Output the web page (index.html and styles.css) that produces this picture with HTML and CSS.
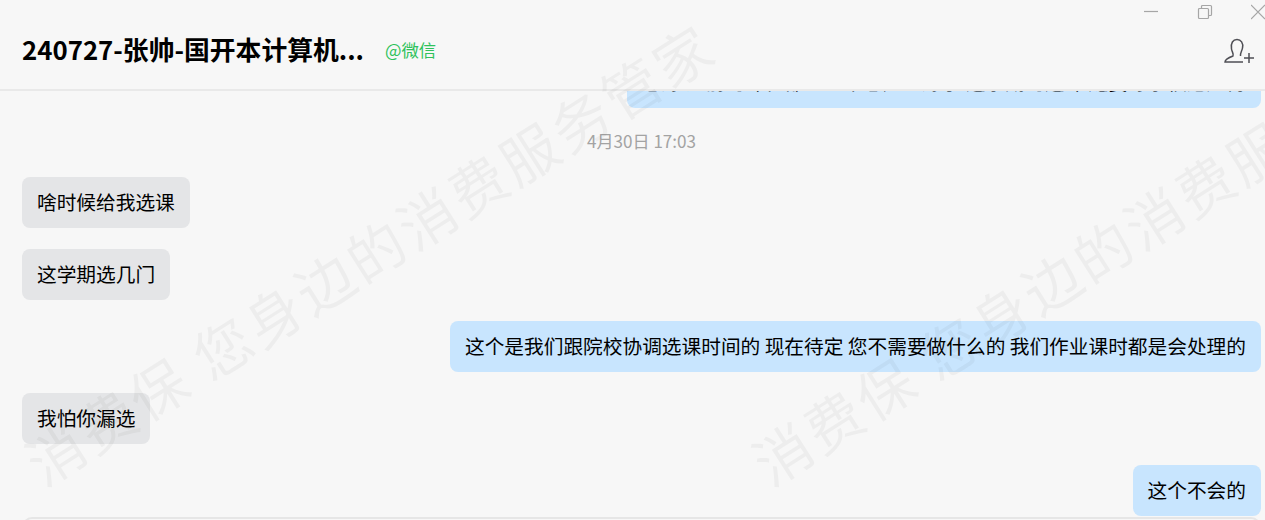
FILE: index.html
```html
<!DOCTYPE html>
<html lang="zh-CN">
<head>
    <meta charset="UTF-8">
    <meta name="viewport" content="width=device-width, initial-scale=1.0">
    <link rel="stylesheet" href="styles.css">
    <title>聊天窗口</title>
</head>
<body>
    <div class="app">
        <header class="header">
            <div class="win-controls">
                <svg class="win-btn" width="14" height="14" viewBox="0 0 14 14"><path d="M0 7.5H14"/></svg>
                <svg class="win-btn" width="16" height="16" viewBox="0 0 16 16"><path d="M1.5 5.5a1 1 0 0 1 1-1h8a1 1 0 0 1 1 1v8a1 1 0 0 1-1 1h-8a1 1 0 0 1-1-1zM4.5 4.5V2.5a1 1 0 0 1 1-1h8a1 1 0 0 1 1 1v8a1 1 0 0 1-1 1h-2"/></svg>
                <svg class="win-btn win-close" width="14" height="16" viewBox="0 0 14 16"><path d="M0 1L14 15M14 1L0 15"/></svg>
            </div>
            <div class="title-row">
                <h1 class="title">240727-张帅-国开本计算机...</h1>
                <span class="source">@微信</span>
                <svg class="add-member" width="32" height="28" viewBox="0 0 32 28"><path d="M20 24H2C2 21 6 19.5 10 18C11 16 9 14 8.5 11C7.5 5 10 1.5 14 1.5C18 1.5 20.5 5 19.5 10C19 13 17 15 17.5 18M21 20H31M26 15V25"/></svg>
            </div>
        </header>

        <main class="messages">
            <div class="bubble mine">您好 之前的课程都已经帮您处理好了 这学期的选课 还要等学校通知再</div>
            <div class="time">4月30日 17:03</div>
            <div class="bubble theirs">啥时候给我选课</div>
            <div class="bubble theirs">这学期选几门</div>
            <div class="bubble mine">这个是我们跟院校协调选课时间的 现在待定 您不需要做什么的 我们作业课时都是会处理的</div>
            <div class="bubble theirs">我怕你漏选</div>
            <div class="bubble mine">这个不会的</div>
        </main>

        <div class="composer-edge">
            <div class="composer"></div>
        </div>
    </div>

    <div class="watermark">
        <span class="mark mark-a">消费保 您身边的消费服务管家</span>
        <span class="mark mark-b">消费保 您身边的消费服务管家</span>
    </div>
</body>
</html>
```

FILE: styles.css
```css
* {
    box-sizing: border-box;
}

html, body {
    margin: 0;
    height: 100%;
    overflow: hidden;
}

body {
    position: relative;
    background: #f7f7f7;
    color: #000;
    font-family: "Noto Sans CJK SC", "Liberation Sans", sans-serif;
}

.app {
    display: flex;
    flex-direction: column;
    height: 100%;
}

.header {
    flex: none;
    height: 91px;
    border-bottom: 2px solid #e9e9e9;
}

.win-controls {
    display: flex;
    justify-content: flex-end;
    align-items: flex-start;
    gap: 39px;
    height: 24px;
    padding-top: 4px;
}

.win-btn {
    fill: none;
    stroke: #a6a6a6;
    stroke-width: 1.2;
}

.win-close {
    margin-left: -1px;
}

.title-row {
    display: flex;
    align-items: center;
    height: 50px;
    padding: 0 10px 0 22px;
}

.title {
    margin: 0;
    font-size: 25.8px;
    line-height: 36px;
    font-weight: 700;
}

.source {
    margin-left: 21px;
    color: #2fc25b;
    font-size: 17.4px;
}

.add-member {
    margin-top: 6px;
    margin-left: auto;
    fill: none;
    stroke: #4f4f55;
    stroke-width: 1.5;
}

.messages {
    flex: 1;
    min-height: 0;
    overflow: hidden;
    display: flex;
    flex-direction: column;
    justify-content: flex-end;
    gap: 21px;
    padding: 0 4px 1px 22px;
}

.bubble {
    flex: none;
    height: 51px;
    padding: 0 15px;
    border-radius: 8px;
    font-size: 19.7px;
    line-height: 50px;
    white-space: nowrap;
}

.theirs {
    align-self: flex-start;
    background: #e4e5e7;
}

.mine {
    align-self: flex-end;
    background: #c8e5fe;
}

.time {
    flex: none;
    height: 24px;
    margin-bottom: 3px;
    text-align: center;
    color: #a3a3a3;
    font-size: 17.1px;
    line-height: 24px;
}

.composer-edge {
    flex: none;
    height: 3px;
    overflow: hidden;
    padding: 0 4px 0 22px;
}

.composer {
    height: 40px;
    border: 2px solid #e6e6e6;
    border-radius: 10px;
}

/* watermark sits over everything */
.watermark {
    position: absolute;
    inset: 0;
    overflow: hidden;
    pointer-events: none;
}

.mark {
    position: absolute;
    top: 0;
    left: 0;
    color: rgba(0, 0, 0, 0.04);
    font-size: 57px;
    line-height: 60px;
    letter-spacing: 3.5px;
    white-space: nowrap;
    transform-origin: 0 50%;
}

.mark-a {
    transform: translate(30px, 437px) rotate(-32.4deg);
}

.mark-b {
    transform: translate(757px, 437px) rotate(-32.4deg);
}
```
